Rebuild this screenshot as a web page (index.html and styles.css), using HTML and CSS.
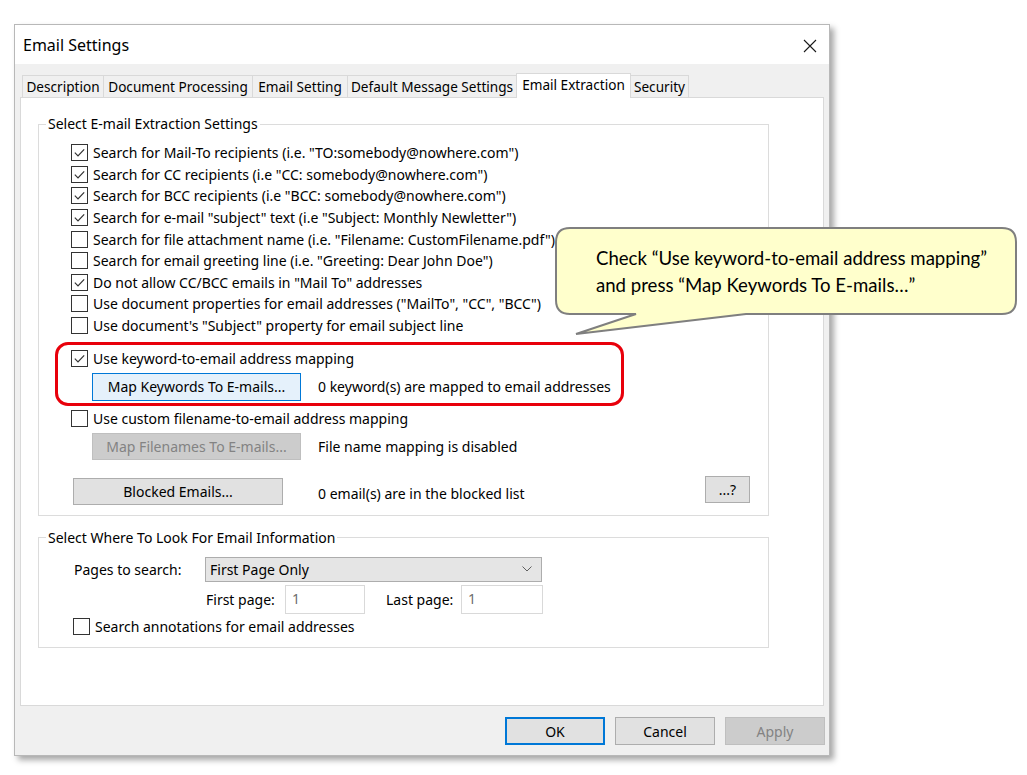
FILE: index.html
```html
<!DOCTYPE html>
<html>
<head>
    <title>Email Settings</title>
    <link rel="stylesheet" href="styles.css">
</head>
<body>
    <div class="window">
        <div class="titlebar">
            <span class="title">Email Settings</span>
            <svg class="close" width="14" height="14" viewBox="0 0 14 14"><path d="M1 1 L13 13 M13 1 L1 13"/></svg>
        </div>

        <div class="dialog-body">
            <div class="tabs">
                <div class="tab tab-description">Description</div>
                <div class="tab tab-processing">Document Processing</div>
                <div class="tab tab-setting">Email Setting</div>
                <div class="tab tab-default">Default Message Settings</div>
                <div class="tab tab-extraction active">Email Extraction</div>
                <div class="tab tab-security">Security</div>
            </div>

            <div class="panel">
                <!-- Extraction options -->
                <fieldset class="group group-extract">
                    <legend>Select E-mail Extraction Settings</legend>
                    <div class="check-list">
                        <div class="check-row"><span class="box"><svg viewBox="0 0 16 16"><path d="M3 8.2 L6.4 11.6 L13 4.6"/></svg></span>Search for Mail-To recipients (i.e. "TO:somebody@nowhere.com")</div>
                        <div class="check-row"><span class="box"><svg viewBox="0 0 16 16"><path d="M3 8.2 L6.4 11.6 L13 4.6"/></svg></span>Search for CC recipients (i.e "CC: somebody@nowhere.com")</div>
                        <div class="check-row"><span class="box"><svg viewBox="0 0 16 16"><path d="M3 8.2 L6.4 11.6 L13 4.6"/></svg></span>Search for BCC recipients (i.e "BCC: somebody@nowhere.com")</div>
                        <div class="check-row"><span class="box"><svg viewBox="0 0 16 16"><path d="M3 8.2 L6.4 11.6 L13 4.6"/></svg></span>Search for e-mail "subject" text (i.e "Subject: Monthly Newletter")</div>
                        <div class="check-row"><span class="box"></span>Search for file attachment name (i.e. "Filename: CustomFilename.pdf")</div>
                        <div class="check-row"><span class="box"></span>Search for email greeting line (i.e. "Greeting: Dear John Doe")</div>
                        <div class="check-row"><span class="box"><svg viewBox="0 0 16 16"><path d="M3 8.2 L6.4 11.6 L13 4.6"/></svg></span>Do not allow CC/BCC emails in "Mail To" addresses</div>
                        <div class="check-row"><span class="box"></span>Use document properties for email addresses ("MailTo", "CC", "BCC")</div>
                        <div class="check-row"><span class="box"></span>Use document's "Subject" property for email subject line</div>
                    </div>

                    <div class="check-row keyword-row"><span class="box"><svg viewBox="0 0 16 16"><path d="M3 8.2 L6.4 11.6 L13 4.6"/></svg></span>Use keyword-to-email address mapping</div>
                    <div class="btn-row keyword-btn-row">
                        <button class="btn btn-focus btn-map">Map Keywords To E-mails...</button>
                        <span class="note">0 keyword(s) are mapped to email addresses</span>
                    </div>

                    <div class="check-row filename-row"><span class="box"></span>Use custom filename-to-email address mapping</div>
                    <div class="btn-row filename-btn-row">
                        <button class="btn btn-disabled btn-map">Map Filenames To E-mails...</button>
                        <span class="note">File name mapping is disabled</span>
                    </div>

                    <div class="btn-row blocked-row">
                        <button class="btn btn-blocked">Blocked Emails...</button>
                        <span class="note note-blocked">0 email(s) are in the blocked list</span>
                        <button class="btn btn-help">...?</button>
                    </div>
                </fieldset>

                <!-- Where to look -->
                <fieldset class="group group-where">
                    <legend>Select Where To Look For Email Information</legend>
                    <div class="field-row">
                        <span class="pages-label">Pages to search:</span>
                        <div class="select">
                            <span>First Page Only</span>
                            <svg width="10" height="6" viewBox="0 0 10 6"><path d="M0.5 0.5 L5 5 L9.5 0.5"/></svg>
                        </div>
                    </div>
                    <div class="field-row range-row">
                        <span class="range-label first-label">First page:</span>
                        <div class="input input-first">1</div>
                        <span class="range-label last-label">Last page:</span>
                        <div class="input input-last">1</div>
                    </div>
                    <div class="check-row annot-row"><span class="box"></span>Search annotations for email addresses</div>
                </fieldset>
            </div>

            <div class="footer">
                <button class="btn btn-footer btn-ok">OK</button>
                <button class="btn btn-footer">Cancel</button>
                <button class="btn btn-footer btn-disabled">Apply</button>
            </div>
        </div>
    </div>

    <!-- Annotation overlays -->
    <div class="highlight"></div>
    <div class="callout">
        <svg class="callout-shape" width="463" height="109" viewBox="0 0 463 109">
            <path d="M15 1 H447 Q461 1 461 15 V73 Q461 87 447 87 H191 L21 107 L81 87 H15 Q1 87 1 73 V15 Q1 1 15 1 Z"/>
        </svg>
        <p class="callout-text">Check “Use keyword-to-email address mapping”<br>and press “Map Keywords To E-mails…”</p>
    </div>
</body>
</html>
```

FILE: styles.css
```css
body {
    margin: 0;
    padding: 0;
    background: #ffffff;
    font-family: "Noto Sans", "Open Sans", sans-serif;
    font-size: 14px;
    color: #000;
    position: relative;
    width: 1027px;
    height: 775px;
    overflow: hidden;
}

.window {
    margin: 24px 0 0 14px;
    width: 816px;
    height: 732px;
    box-sizing: border-box;
    border: 1px solid #b8b8b8;
    background: #f0f0f0;
    box-shadow: 4px 4px 6px rgba(0, 0, 0, 0.35);
}

.titlebar {
    height: 39px;
    background: #fff;
    display: flex;
    align-items: center;
    justify-content: space-between;
    padding: 0 12px 0 8px;
}

.title {
    font-size: 16px;
}

.close {
    fill: none;
    stroke: #1a1a1a;
    stroke-width: 1.1;
    margin-top: 2px;
}

.dialog-body {
    padding: 9px 5px 0 5px;
}

/* Tabs */
.tabs {
    display: flex;
    height: 24px;
    padding-left: 2px;
    position: relative;
    z-index: 1;
}

.tab {
    height: 22px;
    margin-top: 2px;
    box-sizing: border-box;
    border: 1px solid #d9d9d9;
    border-bottom: none;
    border-right: none;
    background: #f0f0f0;
    display: flex;
    align-items: center;
    justify-content: center;
    white-space: nowrap;
    font-size: 13.6px;
}

.tab-description { width: 81px; }
.tab-processing { width: 149px; }
.tab-setting { width: 95px; }
.tab-default { width: 169px; }
.tab-security { width: 58px; border-right: 1px solid #d9d9d9; }

.tab.active {
    width: 115px;
    height: 25px;
    margin-top: 0;
    background: #fff;
    border: 1px solid #d9d9d9;
    border-bottom: none;
    padding-bottom: 3px;
}

.tab.active + .tab {
    border-left: none;
}

.panel {
    height: 609px;
    box-sizing: border-box;
    background: #fff;
    border: 1px solid #d9d9d9;
    padding: 16px 0 0 0;
}

/* Group boxes */
.group {
    margin: 0 54px 0 17px;
    border: 1px solid #dcdcdc;
    padding: 0 18px 10px 32px;
}

.group legend {
    padding: 0 2px;
    margin-left: -25px;
    line-height: 20px;
}

.check-list {
    padding-top: 8px;
    display: flex;
    flex-direction: column;
}

.check-row {
    height: 21.6px;
    display: flex;
    align-items: center;
    white-space: nowrap;
}

.box {
    width: 15px;
    height: 15px;
    border: 1px solid #333;
    background: #fff;
    margin-right: 5px;
    flex-shrink: 0;
    display: flex;
}

.box svg {
    width: 15px;
    height: 15px;
    fill: none;
    stroke: #333;
    stroke-width: 1.3;
}

.keyword-row {
    margin-top: 11px;
}

.btn-row {
    display: flex;
    align-items: center;
}

.keyword-btn-row {
    margin-top: 4px;
    padding-left: 21px;
}

.filename-row {
    margin-top: 7px;
}

.filename-btn-row {
    margin-top: 3px;
    padding-left: 21px;
}

.blocked-row {
    margin-top: 18px;
    padding-left: 2px;
}

.btn {
    font-family: inherit;
    font-size: 14px;
    color: #000;
    background: #e1e1e1;
    border: 1px solid #adadad;
    padding: 0;
    box-sizing: border-box;
}

.btn-map {
    width: 209px;
    height: 28px;
    margin-right: 17px;
}

.filename-btn-row .btn-map {
    height: 27px;
}

.btn-focus {
    background: #e5f1fb;
    border-color: #0078d7;
}

.btn-disabled {
    background: #cccccc;
    border-color: #bfbfbf;
    color: #838383;
}

.btn-blocked {
    width: 210px;
    height: 27px;
    margin-right: 35px;
}

.note-blocked {
    margin-top: 5px;
}

.btn-help {
    width: 45px;
    height: 27px;
    margin-left: auto;
    margin-top: -3px;
}

.group-where {
    margin-top: 12px;
    padding: 9px 18px 10px 34px;
}

.group-where legend {
    margin-left: -27px;
}

.field-row {
    display: flex;
    align-items: center;
}

.pages-label {
    width: 131px;
    margin-left: 1px;
}

.select {
    width: 337px;
    height: 25px;
    box-sizing: border-box;
    background: #e5e5e5;
    border: 1px solid #adadad;
    display: flex;
    align-items: center;
    justify-content: space-between;
    padding: 0 9px 0 4px;
}

.select svg {
    fill: none;
    stroke: #606060;
    stroke-width: 1;
}

.range-row {
    margin-top: 3px;
    padding-left: 133px;
}

.range-label {
    white-space: nowrap;
}

.first-label { width: 79px; }
.last-label { width: 75px; margin-left: 21px; }

.input {
    height: 29px;
    box-sizing: border-box;
    border: 1px solid #d9d9d9;
    background: #fff;
    color: #6d6d6d;
    padding: 3px 0 0 6px;
}

.input-first { width: 80px; }
.input-last { width: 82px; }

.annot-row {
    margin-top: 2px;
}

/* Footer buttons */
.footer {
    display: flex;
    justify-content: flex-end;
    gap: 10px;
    padding-top: 11px;
    margin-right: -1px;
}

.btn-footer {
    width: 100px;
    height: 28px;
}

.btn-ok {
    border: 2px solid #0078d7;
}

/* Annotation overlays */
.highlight {
    position: absolute;
    left: 55px;
    top: 342px;
    width: 569px;
    height: 64px;
    box-sizing: border-box;
    border: 3px solid #e8000b;
    border-radius: 13px;
}

.callout {
    position: absolute;
    left: 555px;
    top: 227px;
    width: 463px;
    height: 109px;
}

.callout-shape {
    position: absolute;
    left: 0;
    top: 0;
}

.callout-shape path {
    fill: #ffffcc;
    stroke: #7f7f7f;
    stroke-width: 2;
}

.callout-text {
    position: relative;
    margin: 0;
    padding: 18px 0 0 41px;
    font-family: Lato, "Open Sans", sans-serif;
    font-size: 18.6px;
    line-height: 27px;
    color: #000;
}
```
